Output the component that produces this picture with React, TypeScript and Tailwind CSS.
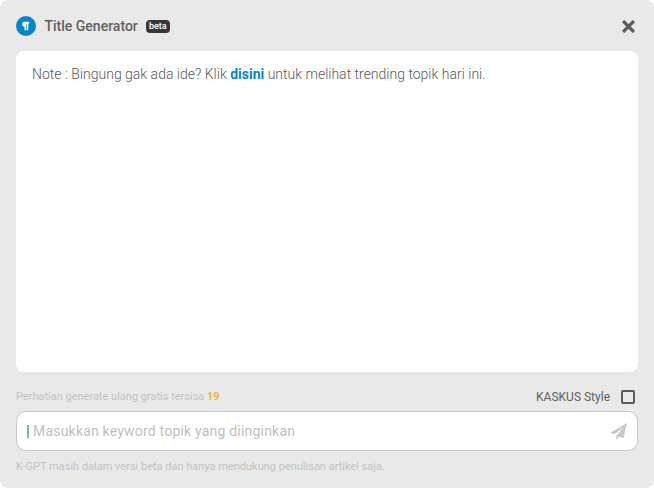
const roboto = "font-['Roboto',sans-serif]";

export default function App() {
  return (
    <div className={`flex h-[488px] w-[654px] flex-col overflow-hidden rounded-[8px] bg-[#e9e9e9] ${roboto}`}>
      {/* Header */}
      <div className="flex h-[51px] shrink-0 items-center pl-4 pr-[19px] pt-[1px]">
        <span className="flex h-5 w-5 items-center justify-center rounded-full bg-[#0685ca]">
          <svg viewBox="0 0 10 10" className="h-[10px] w-[10px]" fill="#fff">
            <path d="M2 .8h6.2v1.7H7.3V9.2H5.6V2.5H5V9.2H3.5V5.8C2.2 5.6 1.2 4.6 1.2 3.3 1.2 2 2 .8 3.5.8Z" />
          </svg>
        </span>
        <span className="ml-[8.5px] text-[14px] font-medium leading-5 text-[#606060]">Title Generator</span>
        <span className="ml-2 flex h-[13px] w-6 items-center justify-center rounded-[4px] bg-[#383838] text-[9px] font-medium leading-none text-white">
          beta
        </span>
        <svg viewBox="0 0 12 12" className="ml-auto h-[13px] w-[13px]" stroke="#5a5a5a" strokeWidth="3">
          <path d="M1 1 11 11M11 1 1 11" />
        </svg>
      </div>

      {/* Result area */}
      <div className="mx-4 h-[321px] shrink-0 rounded-[8px] bg-white px-4 py-[14px] text-[14px] font-light leading-[18px] text-[#5a5a5a]">
        Note : Bingung gak ada ide? Klik <span className="font-bold text-[#0685ca]">disini</span> untuk melihat trending topik hari ini.
      </div>

      {/* Options */}
      <div className="ml-4 mr-[19px] mt-[15px] flex h-[20px] shrink-0 items-center justify-between">
        <span className="text-[11px] leading-4 text-[#c4c4c4]">
          Perhatian generate ulang gratis tersisa <span className="font-medium text-[#f9a825]">19</span>
        </span>
        <div className="flex items-center">
          <span className="text-[12px] leading-4 text-[#606060]">KASKUS Style</span>
          <span className="ml-[11px] h-[14px] w-[14px] rounded-[2px] border-2 border-[#5a5a5a]" />
        </div>
      </div>

      {/* Input */}
      <div className="mx-4 mt-[4px] flex h-[40px] shrink-0 items-center rounded-[10px] border border-[#c8c8c8] bg-white pl-[10px] pr-[10px]">
        <span className="h-[13px] w-[2px] bg-[#6fb2de]" />
        <span className="ml-[4px] text-[14px] leading-5 tracking-[0.2px] text-[#c0c0c0]">Masukkan keyword topik yang diinginkan</span>
        <svg viewBox="0 0 16 16" className="ml-auto h-[17px] w-[17px]" fill="#c9c9c9">
          <path d="M16 0 0 9.2l4.2 1.7L13 3.4 6 12v4l2.6-3.2 4 1.6Z" />
        </svg>
      </div>

      <p className="mx-4 mt-[8px] text-[11px] leading-4 text-[#c4c4c4]">
        K-GPT masih dalam versi beta dan hanya mendukung penulisan artikel saja.
      </p>
    </div>
  );
}
